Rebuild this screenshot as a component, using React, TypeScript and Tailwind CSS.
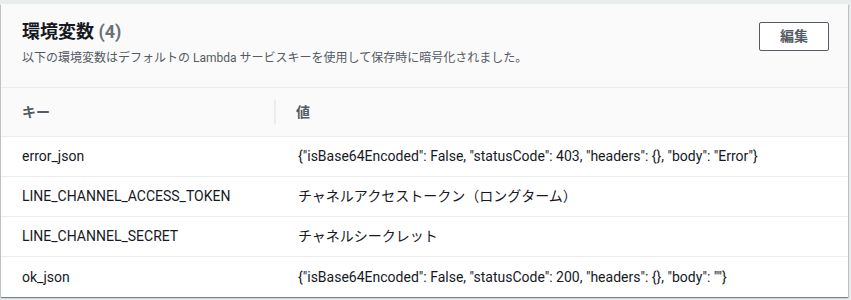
const rows = [
  { key: "error_json", value: '{"isBase64Encoded": False, "statusCode": 403, "headers": {}, "body": "Error"}' },
  { key: "LINE_CHANNEL_ACCESS_TOKEN", value: "チャネルアクセストークン（ロングターム）" },
  { key: "LINE_CHANNEL_SECRET", value: "チャネルシークレット" },
  { key: "ok_json", value: '{"isBase64Encoded": False, "statusCode": 200, "headers": {}, "body": ""}' },
];

export default function App() {
  return (
    <div
      className="w-[851px] h-[300px] bg-[#eaeded] pt-[4px] pl-[1px] overflow-hidden"
      style={{ fontFamily: 'Roboto, "Noto Sans CJK JP", sans-serif' }}
    >
      <div className="w-[847px] bg-white shadow-[0_1px_1px_0_rgba(0,28,36,0.3),1px_1px_1px_0_rgba(0,28,36,0.15),-1px_1px_1px_0_rgba(0,28,36,0.15)]">
        {/* header */}
        <div className="bg-[#fafafa] border-b border-[#eaeded] h-[84px] flex justify-between px-[21px] pt-[16px]">
          <div>
            <h2 className="text-[18px] leading-[24px] font-bold text-[#16191f]">
              環境変数 <span className="text-[#687078]">(4)</span>
            </h2>
            <p className="mt-[6px] text-[12px] leading-[16px] text-[#545b64]">
              以下の環境変数はデフォルトの Lambda サービスキーを使用して保存時に暗号化されました。
            </p>
          </div>
          <button className="mt-[2px] h-[29px] w-[70px] mr-[-2px] border border-[#545b64] rounded-[2px] bg-white text-[14px] font-bold text-[#545b64]">
            編集
          </button>
        </div>

        {/* column headers */}
        <div className="bg-[#fafafa] border-b border-[#eaeded] h-[49px] flex items-center text-[14px] font-bold text-[#545b64]">
          <div className="w-[275px] pl-[21px] border-r-2 border-[#eaeded] h-[24px] flex items-center">キー</div>
          <div className="pl-[20px]">値</div>
        </div>

        {rows.map((r, i) => (
          <div
            key={r.key}
            className={`h-[40px] flex items-center text-[14px] text-[#16191f] ${i < rows.length - 1 ? "border-b border-[#eaeded]" : ""}`}
          >
            <div className="w-[275px] pl-[21px]">{r.key}</div>
            <div className="pl-[22px] whitespace-nowrap">{r.value}</div>
          </div>
        ))}
      </div>
    </div>
  );
}
